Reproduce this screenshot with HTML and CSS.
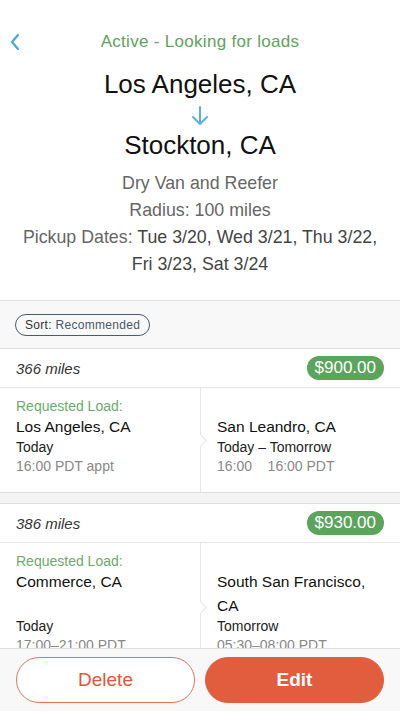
FILE: index.html
```html
<!DOCTYPE html>
<html lang="en">
<head>
    <meta charset="UTF-8">
    <meta name="viewport" content="width=device-width, initial-scale=1.0">
    <title>Truck Search</title>
    <link rel="stylesheet" href="styles.css">
</head>
<body>
    <div class="screen">
        <div class="summary">
            <div class="nav">
                <svg class="back" width="12" height="18" viewBox="0 0 12 18"><path d="M9 2 L3 9 L9 16" fill="none" stroke="#47a7dd" stroke-width="2.2" stroke-linecap="round" stroke-linejoin="round"/></svg>
                <div class="status">Active - Looking for loads</div>
                <span></span>
            </div>
            <div class="city">Los Angeles, CA</div>
            <svg class="arrow" width="20" height="22" viewBox="0 0 20 22"><path d="M10 2 V19 M3 12 L10 19 L17 12" fill="none" stroke="#58b1e0" stroke-width="2" stroke-linecap="round" stroke-linejoin="round"/></svg>
            <div class="city">Stockton, CA</div>
            <div class="details">
                <div>Dry Van and Reefer</div>
                <div>Radius: 100 miles</div>
                <div>Pickup Dates: <span class="dark">Tue 3/20, Wed 3/21, Thu 3/22,<br>Fri 3/23, Sat 3/24</span></div>
            </div>
        </div>

        <div class="list">
            <div class="sort-bar">
                <span class="sort-pill"><b>Sort:</b> Recommended</span>
            </div>

            <div class="load">
                <div class="load-head">
                    <span class="miles">366 miles</span>
                    <span class="price">$900.00</span>
                </div>
                <div class="load-body">
                    <div class="cell left first label">Requested Load:</div>
                    <div class="cell right first"></div>
                    <div class="cell left name">Los Angeles, CA</div>
                    <div class="cell right name">San Leandro, CA</div>
                    <div class="cell left day">Today</div>
                    <div class="cell right day">Today – Tomorrow</div>
                    <div class="cell left time last">16:00 PDT appt</div>
                    <div class="cell right time last">16:00 &nbsp;&nbsp;&nbsp;16:00 PDT</div>
                </div>
            </div>

            <div class="load">
                <div class="load-head">
                    <span class="miles">386 miles</span>
                    <span class="price">$930.00</span>
                </div>
                <div class="load-body">
                    <div class="cell left first label">Requested Load:</div>
                    <div class="cell right first"></div>
                    <div class="cell left name">Commerce, CA</div>
                    <div class="cell right name">South San Francisco, CA</div>
                    <div class="cell left day">Today</div>
                    <div class="cell right day">Tomorrow</div>
                    <div class="cell left time last">17:00–21:00 PDT</div>
                    <div class="cell right time last">05:30–08:00 PDT</div>
                </div>
            </div>
        </div>

        <div class="actions">
            <button class="btn delete">Delete</button>
            <button class="btn edit">Edit</button>
        </div>
    </div>
</body>
</html>
```

FILE: styles.css
```css
body {
    margin: 0;
    font-family: 'Liberation Sans', Arial, sans-serif;
    color: #111;
    background: #fff;
}
.screen {
    height: 711px;
    display: flex;
    flex-direction: column;
    overflow: hidden;
}
.summary {
    display: flex;
    flex-direction: column;
    align-items: center;
    padding: 31px 0 22px;
    text-align: center;
}
.nav {
    width: 100%;
    display: grid;
    grid-template-columns: 40px 1fr 40px;
    align-items: center;
    height: 22px;
}
.back {
    margin-left: 9px;
}
.status {
    color: #5ea35e;
    font-size: 17px;
    letter-spacing: 0.3px;
}
.city {
    font-size: 26px;
    line-height: 32px;
    color: #111;
}
.nav + .city {
    margin-top: 15px;
}
.arrow {
    margin: 5px 0 2px;
}
.details {
    margin-top: 9px;
    font-size: 17.8px;
    line-height: 27px;
    color: #666;
}
.details .dark {
    color: #444;
}
.list {
    flex: 1;
    overflow: hidden;
    background: #f4f4f4;
    border-top: 1px solid #dedede;
}
.sort-bar {
    height: 47px;
    display: flex;
    align-items: center;
    padding-left: 15px;
    background: #f8f8f8;
}
.sort-pill {
    font-size: 12px;
    color: #4a5968;
    border: 1px solid #4a5c6c;
    border-radius: 12px;
    padding: 3px 9px;
    letter-spacing: 0.3px;
}
.sort-pill b {
    font-weight: normal;
    color: #333;
}
.load {
    background: #fff;
    border-top: 1px solid #dedede;
    border-bottom: 1px solid #dedede;
    margin-bottom: 10px;
}
.load-head {
    height: 38px;
    display: flex;
    align-items: center;
    justify-content: space-between;
    padding: 0 16px;
    border-bottom: 1px solid #e6e6e6;
}
.miles {
    font-style: italic;
    font-size: 15px;
    color: #333;
}
.price {
    background: #5aa45c;
    color: #fff;
    font-size: 17px;
    border-radius: 12px;
    padding: 3px 8px;
    line-height: 18px;
}
.load-body {
    position: relative;
    display: grid;
    grid-template-columns: 200px 200px;
    background: linear-gradient(#e6e6e6, #e6e6e6) 200px 0 / 1px 100% no-repeat;
}
.load-body::after {
    content: "";
    position: absolute;
    left: 196px;
    top: 50%;
    width: 8px;
    height: 8px;
    margin-top: -4px;
    background: #fff;
    border-top: 1px solid #e6e6e6;
    border-right: 1px solid #e6e6e6;
    transform: rotate(45deg);
}
.cell.left {
    padding-left: 16px;
}
.cell.right {
    padding-left: 17px;
    padding-right: 16px;
}
.cell.first {
    padding-top: 9px;
}
.cell.last {
    padding-bottom: 15px;
}
.label {
    color: #6aab6a;
    font-size: 14px;
    line-height: 18px;
}
.name {
    font-size: 15.5px;
    line-height: 24px;
    color: #111;
}
.day {
    font-size: 14px;
    line-height: 16px;
    color: #222;
}
.time {
    font-size: 14px;
    line-height: 22px;
    color: #888;
}
.actions {
    display: flex;
    gap: 10px;
    padding: 8px 16px 8px;
    background: #f8f8f8;
    border-top: 1px solid #dedede;
}
.btn {
    flex: 1;
    height: 46px;
    border-radius: 23px;
    font-family: inherit;
    font-size: 19px;
}
.delete {
    background: #fff;
    border: 1px solid #e0735a;
    color: #df5636;
}
.edit {
    background: #e25c3e;
    border: 1px solid #e25c3e;
    color: #fff;
    font-weight: bold;
}
```
